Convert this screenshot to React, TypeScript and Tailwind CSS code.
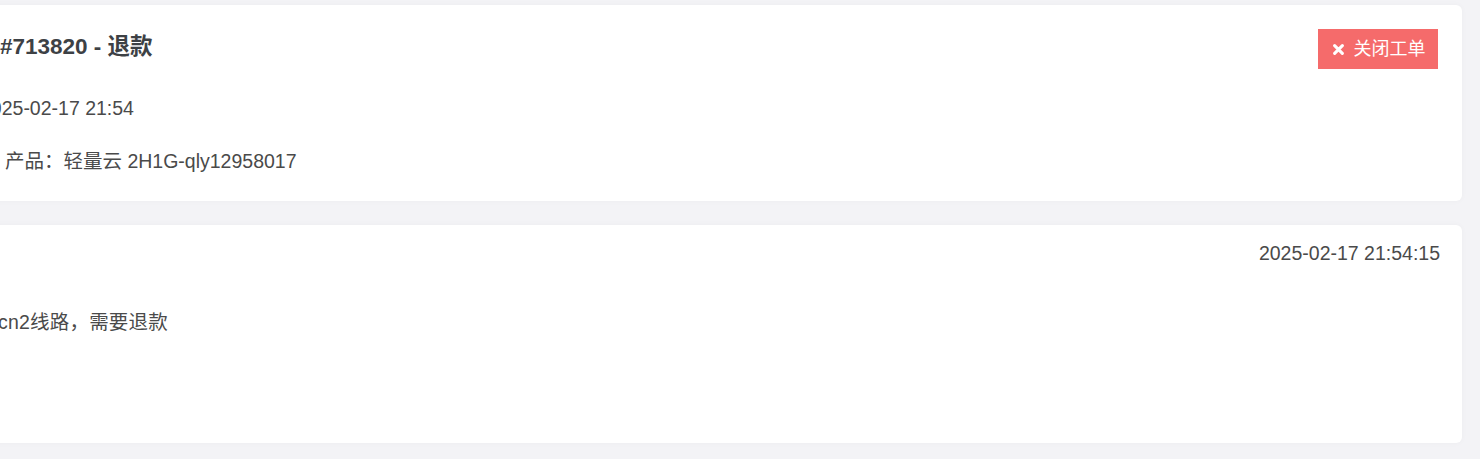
import React from "react";

export default function App() {
  const font = { fontFamily: '"Liberation Sans", "Noto Sans CJK SC", Arial, sans-serif' };
  return (
    <div className="w-[1480px] h-[459px] overflow-hidden bg-[#f3f3f6]" style={font}>
      <div className="ml-[-40px] mr-[18px] pt-[5px] flex flex-col gap-[24px]">
        {/* Card 1 */}
        <div className="bg-white rounded-[6px] shadow-[0_0_6px_rgba(0,0,0,0.03)] pl-[40px] pr-[24px] pt-[24px] pb-[25px]">
          <div className="h-[40px] flex items-center justify-between">
            <h2 className="text-[22.5px] font-bold text-[#3d4145] leading-[30px] mt-[-4px]">#713820 - 退款</h2>
            <button className="w-[120px] h-[40px] bg-[#f56b6b] text-white text-[18px] flex items-center justify-center gap-[10px] pl-[2px]">
              <svg width="11" height="11" viewBox="0 0 10 10" className="mt-[1px]">
                <path d="M1.5 1.5 L8.5 8.5 M8.5 1.5 L1.5 8.5" stroke="white" strokeWidth="2.8" strokeLinecap="round" />
              </svg>
              <span>关闭工单</span>
            </button>
          </div>
          <div className="mt-[24px] text-[19.5px] leading-[30px] text-[#4a4a4a] ml-[-20px]">2025-02-17 21:54</div>
          <div className="mt-[23px] text-[19.5px] leading-[30px] text-[#4a4a4a] ml-[5px]">产品：轻量云 2H1G-qly12958017</div>
        </div>
        {/* Card 2 */}
        <div className="bg-white rounded-[6px] shadow-[0_0_6px_rgba(0,0,0,0.03)] pl-[40px] pr-[22px] pt-[13px] h-[218px]">
          <div className="text-right text-[19.5px] leading-[30px] text-[#4a4a4a]">2025-02-17 21:54:15</div>
          <div className="mt-[39px] text-[19.5px] leading-[30px] text-[#4a4a4a] ml-[-2px] tracking-[0.2px]">cn2线路，需要退款</div>
        </div>
      </div>
    </div>
  );
}
